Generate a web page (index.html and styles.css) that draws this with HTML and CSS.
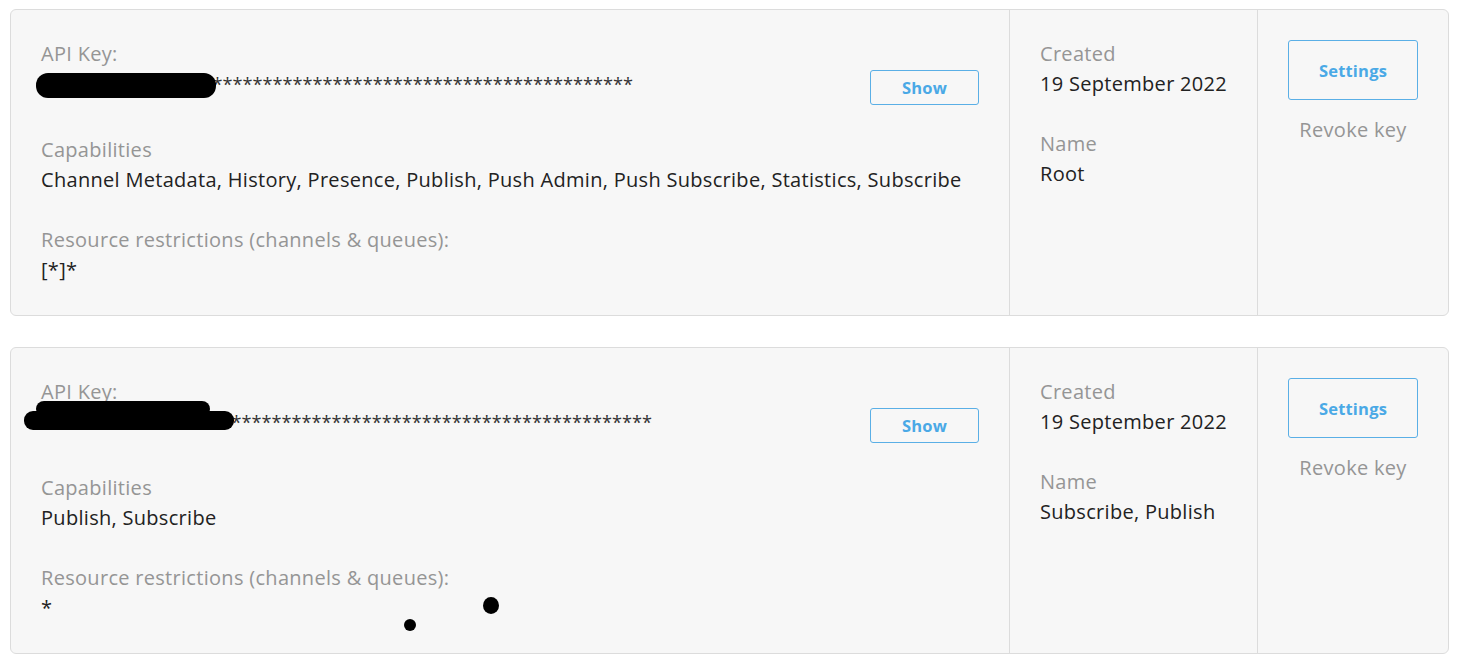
FILE: index.html
```html
<!DOCTYPE html>
<html>
<head>
<meta charset="utf-8">
<link rel="stylesheet" href="styles.css">
</head>
<body>
<div class="list">
  <div class="card">
    <div class="col-main">
      <div class="field">
        <div class="label">API Key:</div>
        <div class="key-row">
          <div class="key"><span class="redact r1"></span><span class="prefix">xxxxxxxxxxxxxxxxxx</span>******************************************</div>
          <button class="btn show">Show</button>
        </div>
      </div>
      <div class="field">
        <div class="label">Capabilities</div>
        <div class="value">Channel Metadata, History, Presence, Publish, Push Admin, Push Subscribe, Statistics, Subscribe</div>
      </div>
      <div class="field">
        <div class="label">Resource restrictions (channels &amp; queues):</div>
        <div class="value">[*]*</div>
      </div>
    </div>
    <div class="col-meta">
      <div class="field">
        <div class="label">Created</div>
        <div class="value">19 September 2022</div>
      </div>
      <div class="field">
        <div class="label">Name</div>
        <div class="value">Root</div>
      </div>
    </div>
    <div class="col-actions">
      <button class="btn settings">Settings</button>
      <a class="revoke">Revoke key</a>
    </div>
  </div>

  <div class="card">
    <div class="col-main">
      <div class="field">
        <div class="label">API Key:</div>
        <div class="key-row">
          <div class="key"><span class="redact r2a"></span><span class="redact r2b"></span><span class="prefix p2">xxxxxxxxxxxxxxxxxxxx</span>******************************************</div>
          <button class="btn show">Show</button>
        </div>
      </div>
      <div class="field">
        <div class="label">Capabilities</div>
        <div class="value">Publish, Subscribe</div>
      </div>
      <div class="field">
        <div class="label">Resource restrictions (channels &amp; queues):</div>
        <div class="value">*</div>
      </div>
      <span class="dot d1"></span>
      <span class="dot d2"></span>
    </div>
    <div class="col-meta">
      <div class="field">
        <div class="label">Created</div>
        <div class="value">19 September 2022</div>
      </div>
      <div class="field">
        <div class="label">Name</div>
        <div class="value">Subscribe, Publish</div>
      </div>
    </div>
    <div class="col-actions">
      <button class="btn settings">Settings</button>
      <a class="revoke">Revoke key</a>
    </div>
  </div>
</div>
</body>
</html>
```

FILE: styles.css
```css
* { box-sizing: border-box; }
body {
  margin: 0;
  background: #fff;
  font-family: "Open Sans", "Lato", sans-serif;
  color: #222;
}
.list {
  padding: 9px 16px 0 10px;
  display: flex;
  flex-direction: column;
  gap: 31px;
}
.card {
  display: flex;
  width: 1439px;
  height: 307px;
  background: #f7f7f7;
  border: 1px solid #dcdcdc;
  border-radius: 6px;
}
.col-main {
  position: relative;
  width: 999px;
  padding: 29px 30px 0 30px;
  border-right: 1px solid #dcdcdc;
}
.col-meta {
  width: 248px;
  padding: 29px 20px 0 30px;
  border-right: 1px solid #dcdcdc;
}
.col-actions {
  flex: 1;
  display: flex;
  flex-direction: column;
  align-items: center;
  padding-top: 30px;
}
.field { margin-bottom: 30px; }
.col-meta .field { margin-bottom: 0; }
.col-meta .field + .field { margin-top: 30px; }
.label, .value, .revoke {
  font-size: 20px;
  letter-spacing: 0.3px;
  line-height: 30px;
}
.label { color: #959595; }
.value { color: #222; white-space: nowrap; }
.key-row {
  display: flex;
  justify-content: space-between;
  align-items: flex-start;
}
.key {
  position: relative;
  font-family: "Open Sans", sans-serif;
  font-size: 18.2px;
  line-height: 30px;
  color: #333;
}
.prefix { visibility: hidden; }
.redact {
  position: absolute;
  background: #000;
  border-radius: 12px;
}
.r1 { left: -5px; top: 4px; width: 180px; height: 25px; }
.r2a { left: -5px; top: -6px; width: 174px; height: 16px; border-radius: 8px; }
.r2b { left: -17px; top: 4px; width: 210px; height: 19px; border-radius: 9px; }
.btn {
  background: transparent;
  border: 1px solid #5aafe6;
  border-radius: 3px;
  color: #4aa9e6;
  font-family: "Open Sans", sans-serif;
  font-weight: 700;
  letter-spacing: 0.2px;
  cursor: pointer;
}
.show {
  width: 109px;
  height: 35px;
  font-size: 16.5px;
  margin-top: 1px;
}
.settings {
  width: 130px;
  height: 60px;
  font-size: 16.5px;
}
.revoke {
  margin-top: 15px;
  color: #959595;
}
.dot {
  position: absolute;
  background: #000;
  border-radius: 50%;
}
.d1 { left: 393px; top: 271px; width: 12px; height: 12px; }
.d2 { left: 472px; top: 249px; width: 16px; height: 17px; }
```
